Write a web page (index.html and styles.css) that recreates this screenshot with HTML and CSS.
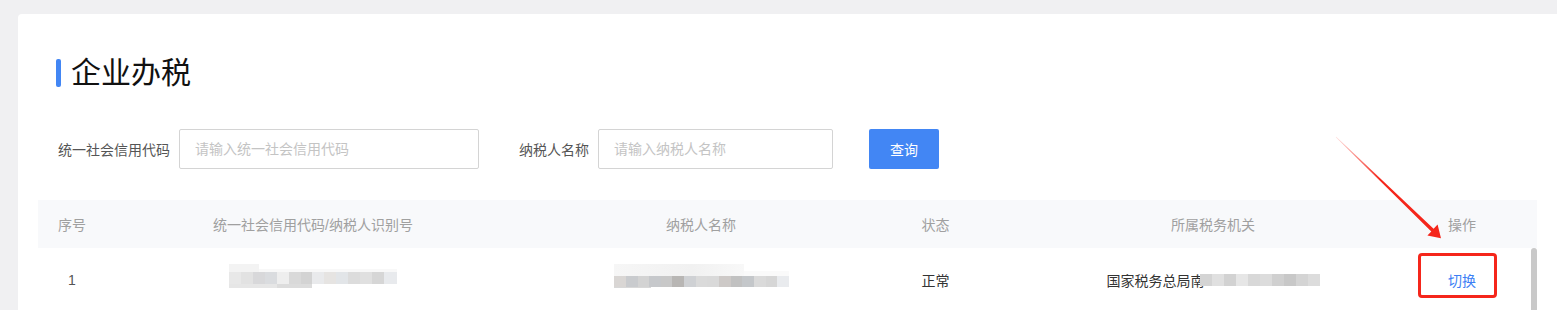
FILE: index.html
```html
<!DOCTYPE html>
<html lang="zh-CN">
<head>
	<meta charset="UTF-8">
	<title>企业办税</title>
	<link rel="stylesheet" href="styles.css">
</head>
<body>
	<div class="main">
		<div class="title"><i class="bar"></i><h2>企业办税</h2></div>

		<div class="search">
			<label>统一社会信用代码</label>
			<input class="ipt" type="text" placeholder="请输入统一社会信用代码">
			<label class="lb2">纳税人名称</label>
			<input class="ipt ipt-name" type="text" placeholder="请输入纳税人名称">
			<button class="btn">查询</button>
		</div>

		<div class="table">
			<div class="thead">
				<span>序号</span>
				<span>统一社会信用代码/纳税人识别号</span>
				<span>纳税人名称</span>
				<span>状态</span>
				<span>所属税务机关</span>
				<span>操作</span>
			</div>
			<div class="tbody">
				<div class="rows">
					<div class="tr">
						<span class="num">1</span>
						<span><i class="blur blur-code"></i></span>
						<span><i class="blur blur-name"></i></span>
						<span>正常</span>
						<span>国家税务总局南<i class="blur-org"></i></span>
						<span><a class="link" href="javascript:;">切换</a></span>
					</div>
				</div>
				<div class="scroll"><i></i></div>
			</div>
		</div>
	</div>

	<!-- 标注 -->
	<div class="mark"></div>
	<svg class="arrow" width="1557" height="310" viewBox="0 0 1557 310">
		<defs>
			<linearGradient id="fade" gradientUnits="userSpaceOnUse" x1="1336" y1="137" x2="1380" y2="180">
				<stop offset="0" stop-color="#f5261b" stop-opacity="0.15"/>
				<stop offset="1" stop-color="#f5261b"/>
			</linearGradient>
		</defs>
		<polygon fill="url(#fade)" points="1336.2,136.8 1433.6,228.7 1437.6,224.6 1441,238.3 1427.4,235.6 1431.3,231.6 1335.8,137.2"/>
	</svg>
</body>
</html>
```

FILE: styles.css
```css
html,body{height:310px;overflow:hidden;}
body{margin:0;padding:14px 0 0 18px;background:#f0f0f2;font-family:"Liberation Sans","Noto Sans CJK SC",sans-serif;box-sizing:border-box;}
.main{background:#fff;border-radius:4px 0 0 0;padding:45px 20px 0;height:296px;box-sizing:border-box;}

/* 标题 */
.title{display:flex;align-items:center;padding-left:18px;height:28px;}
.title .bar{display:block;width:5px;height:28px;background:#4286f4;border-radius:2px;margin-right:10px;}
.title h2{margin:0;font-size:30px;line-height:28px;font-weight:normal;color:#111;}

/* 查询条件 */
.search{display:flex;align-items:center;margin-top:42px;padding-left:20px;height:40px;}
.search label{font-size:14px;color:#555;margin-right:9px;}
.search .lb2{margin-left:40px;}
.ipt{width:300px;height:40px;box-sizing:border-box;border:1px solid #d4d4d4;border-radius:2px;padding:0 15px;font-size:14px;font-family:inherit;color:#333;outline:none;}
.ipt::placeholder{color:#c4c4c4;}
.ipt-name{width:235px;}
.btn{margin-left:36px;width:70px;height:40px;border:0;border-radius:2px;background:#4286f4;color:#fff;font-size:14px;font-family:inherit;}

/* 表格 */
.table{margin-top:31px;}
.thead,.tr{display:grid;grid-template-columns:68px 414px 362px 107px 448px 50px;align-items:center;text-align:center;font-size:14px;}
.thead{height:48px;background:#f8f9fb;color:#a0a0a0;}
.tbody{display:flex;}
.rows{flex:1;}
.tr{height:64px;color:#333;}
.tr .num{color:#555;}
.tr span{display:flex;justify-content:center;align-items:center;white-space:nowrap;}
.link{color:#3d7ff5;text-decoration:none;}
.scroll{width:6px;}
.scroll i{display:block;height:64px;background:#c9c9c9;border-radius:3px;}

/* 打码 */
.blur{display:block;height:24px;margin-bottom:8px;}
.blur-code{width:168px;background:
	linear-gradient(to right,#e8e8e8 0 12px,#e2e2e2 12px 24px,#d8d8da 24px 36px,#dadcdf 36px 48px,#eeeeee 48px 60px,#d9d9d9 60px 72px,#d3d3d3 72px 83px,#e9eaec 83px 95px,#e6e4e2 95px 107px,#e2e5e8 107px 119px,#dcdcdc 119px 131px,#e0e0e0 131px 143px,#d6d6d6 143px 155px,#e8eaed 155px 168px) 0 8px/168px 12px no-repeat,
	linear-gradient(to right,#e6e6e6 0 48px,#dcdcdc 48px 83px) 0 20px/83px 4px no-repeat,
	linear-gradient(#f3f3f3,#f3f3f3) 0 0/30px 8px no-repeat,
	linear-gradient(#f8f8f8,#f8f8f8) 0 5px/168px 3px no-repeat;}
.blur-name{width:175px;background:
	linear-gradient(to right,#d9d6d4 0 12px,#c9cbce 12px 24px,#d3d3d3 24px 35px,#c6c8cb 35px 47px,#c8c8c8 47px 58px,#b8b6b4 58px 70px,#cfd1d4 70px 82px,#dadada 82px 93px,#d9d9d9 93px 105px,#cdc9c7 105px 117px,#c1c1c1 117px 128px,#c4c7ca 128px 140px,#dadada 140px 152px,#d6d6d6 152px 163px,#e9ebee 163px 175px) 0 12px/175px 11px no-repeat,
	linear-gradient(#d8d8d8,#d8d8d8) 0 23px/37px 1px no-repeat,
	linear-gradient(to right,#f6f6f6,#f1f1f1 60%,#f8f8f8) 0 0/130px 12px no-repeat,
	linear-gradient(#fafafa,#fafafa) 0 7px/175px 5px no-repeat;}
.blur-org{display:inline-block;width:120px;height:12px;margin-left:-5px;vertical-align:-3px;background:
	linear-gradient(to right,#d4d4d4 0 12px,#e0e0e0 12px 24px,#d2d2d2 24px 36px,#e6e6e6 36px 48px,#d8d8d8 48px 60px,#dcdcdc 60px 72px,#d0d0d0 72px 84px,#c8c8c8 84px 96px,#d4d4d4 96px 108px,#dcdcdc 108px 120px);}

/* 标注 */
.mark{position:absolute;left:1418px;top:253px;width:79px;height:45px;box-sizing:border-box;border:3px solid #f5261b;border-radius:4px;}
.arrow{position:absolute;left:0;top:0;pointer-events:none;}
```
